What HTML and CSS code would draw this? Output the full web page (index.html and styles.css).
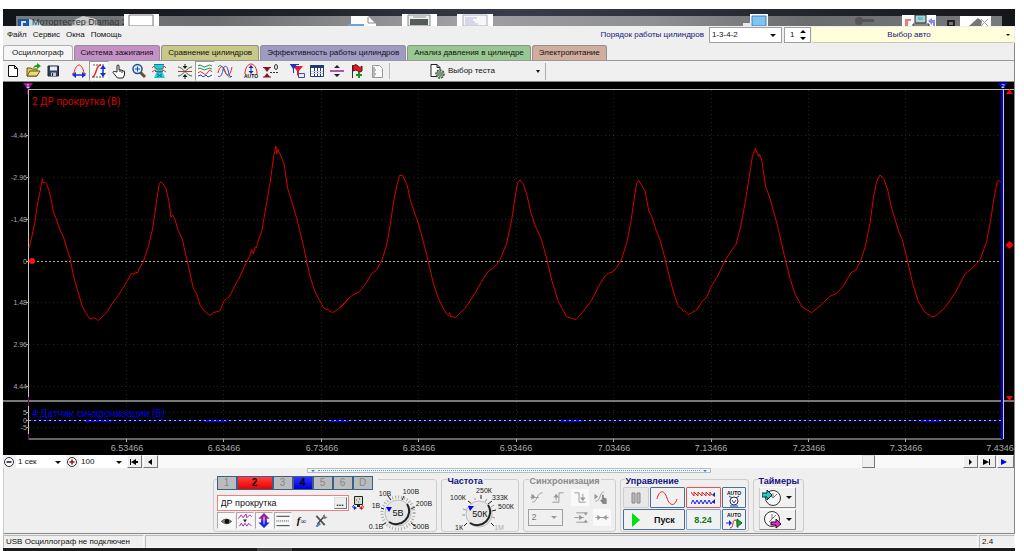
FILE: index.html
```html
<!DOCTYPE html>
<html lang="ru">
<head>
<meta charset="utf-8">
<title>Мотортестер Diamag 2</title>
<link rel="stylesheet" href="styles.css">
</head>
<body>
<div class="window">

<svg class="desktop" viewBox="3 9 1012 17" aria-hidden="true">
  <defs>
    <linearGradient id="sky"><stop offset="0" stop-color="#111418"/><stop offset=".3" stop-color="#20222a"/><stop offset=".5" stop-color="#3a3c4c"/><stop offset=".68" stop-color="#2c2e3a"/><stop offset="1" stop-color="#14161a"/></linearGradient>
    <linearGradient id="glass"><stop offset="0" stop-color="#777a7c"/><stop offset=".2" stop-color="#6c6e70"/><stop offset=".45" stop-color="#a0a0a4"/><stop offset=".65" stop-color="#8e8f92"/><stop offset=".8" stop-color="#6a6c6e"/><stop offset="1" stop-color="#77797a"/></linearGradient>
  </defs>
  <rect x="3" y="9" width="1012" height="17" fill="url(#sky)"/>
  <rect x="16" y="16" width="986" height="10" fill="url(#glass)"/>
  <rect x="18" y="19" width="11" height="7" fill="#1c56a4"/>
  <path d="M21 21h5v2h-3v3h-2z" fill="#cfe2f5"/>
  <path d="M29 19l10 3 3 4H29z" fill="#b9dbea"/>
  <path d="M72 26l2-6 9-4 13 3 3 7z" fill="#dfe1e2" opacity=".8"/>
  <path d="M76 20l8 3 11-3" stroke="#aeb2b4" fill="none"/>
  <text x="32" y="25" class="ghost">Мотортестер Diamag 2</text>
  <path d="M124 14h35v12h-35z" fill="#fff"/><path d="M129 15h24v11h-24z" fill="#fff" stroke="#777"/>
  <path d="M351 16h17l8 8v2h-25z" fill="#fff"/><path d="M368 17v6h7" fill="none" stroke="#888"/><path d="M348 24h16v2h-16z" fill="#6aa3e4"/>
  <path d="M402 14h35v12h-35z" fill="#fff"/><path d="M408 15h22v11h-22z" fill="#eee" stroke="#888"/><path d="M410 19h18v6h-18z" fill="#555c5c"/><path d="M413 17h13" stroke="#999"/>
  <path d="M457 14h36v12h-36z" fill="#fff"/><path d="M463 15h24v11h-24z" fill="#f7f7fb" stroke="#aab"/><path d="M465 18h12M465 20h8M465 22h10M465 24h13" stroke="#b5b5dd"/>
  <path d="M750 14h18v12h-18z" fill="#fff"/><path d="M752 16h14v10h-14z" fill="#7fc4f0" stroke="#3f7fd0"/><path d="M743 23h8v3h-8z" fill="#e8e8e8"/>
  <circle cx="859" cy="21" r="4" fill="#555"/><path d="M862 19h12v3h-12z" fill="#555"/>
  <path d="M902 15h34v11h-34z" fill="#fff"/><path d="M905 19h6v2h-3v5h-3z" fill="#f07878"/><path d="M915 15h11v8h-11z" fill="#b8cccc" stroke="#222"/><path d="M918 17h5v3h-5z" fill="#39d0e8"/><path d="M913 24h16v2h-16z" fill="#ddd" stroke="#333"/><path d="M928 21l4-3v2h3v6h-2v-3h-1v2z" fill="#8b86f0"/>
  <path d="M948 21h6v5h-6z" fill="none" stroke="#222" stroke-width="2"/>
  <path d="M960 16h31v10h-31z" fill="#fff"/><path d="M969 26l9-8 4 3-1 5z" fill="#777"/><path d="M981 19l7 7M988 19l-7 7" stroke="#999"/>
</svg>

<header class="menubar">
  <nav class="menu">
    <button type="button">Файл</button><button type="button">Сервис</button><button type="button">Окна</button><button type="button">Помощь</button>
  </nav>
  <div class="order">
    <label for="order">Порядок работы цилиндров</label>
    <span class="combo order-combo"><select id="order"><option>1-3-4-2</option></select></span>
    <span class="spin"><input type="text" value="1" aria-label="Цилиндр"><svg viewBox="0 0 6 12" aria-hidden="true"><path d="M0 4h6L3 1zM0 8h6l-3 3z"/></svg></span>
    <button type="button" class="car"><span>Выбор авто</span><i class="caret"></i></button>
  </div>
</header>

<nav class="tabs">
  <button type="button" class="tab active">Осциллограф</button>
  <button type="button" class="tab violet">Система зажигания</button>
  <button type="button" class="tab olive">Сравнение цилиндров</button>
  <button type="button" class="tab blue">Эффективность работы цилиндров</button>
  <button type="button" class="tab green">Анализ давления в цилиндре</button>
  <button type="button" class="tab tan">Электропитание</button>
</nav>

<div class="toolbar">
  <button type="button" class="tool" aria-label="Новый"><svg viewBox="0 0 16 16"><path d="M3.500 2.500h6l3 3V13.500h-9zM9.500 2.500v3h3" fill="#fff" stroke="#111"/></svg></button>
  <button type="button" class="tool" aria-label="Открыть"><svg viewBox="0 0 16 16"><path d="M2 13V5h4l1 1h5v7z" fill="#d8c860" stroke="#665800"/><path d="M2 13l3-5h10l-3 5z" fill="#e9da83" stroke="#665800"/><path d="M8 5q1-3 4-3V0l4 3-4 3V4q-2 0-4 1z" fill="#15a015"/></svg></button>
  <button type="button" class="tool" aria-label="Сохранить"><svg viewBox="0 0 16 16"><path d="M3 3h10.500v10H3z" fill="#34405f" stroke="#182036"/><path d="M5 3.500h7v4H5z" fill="#e8ecf4"/><path d="M6 9.500h5V13H6z" fill="#c4cada"/><path d="M7 10h1v3H7z" fill="#223"/></svg></button>
  <span class="sep"></span>
  <button type="button" class="tool" aria-label="Масштаб по горизонтали"><svg viewBox="0 0 16 16" fill="none"><path d="M1 11l2-1C4 5 6 2 8 2s4 3 5 8l2 1" stroke="#e22"/><path d="M3 12h10" stroke="#1030d8" stroke-width="1.500"/><path d="M1 12l4-3v6zM15 12l-4-3v6z" fill="#1030d8"/></svg></button>
  <button type="button" class="tool pressed" aria-label="Масштаб по вертикали"><svg viewBox="0 0 16 16" fill="none"><path d="M2 2h12M2 14h12" stroke="#555" stroke-dasharray="2 1"/><path d="M1 14c5 0 3-12 9-12" stroke="#e22" stroke-width="1.500"/><path d="M12 4v8" stroke="#1030d8" stroke-width="1.500"/><path d="M12 2l3 4H9zM12 14l3-4H9z" fill="#1030d8"/></svg></button>
  <button type="button" class="tool" aria-label="Рука"><svg viewBox="0 0 16 16"><path d="M6 9V2.500q1-1 2 0V7l1-.5 1 .8 1-.3 1 1 1.500.2V12l-1.500 3H6.500L2 9.500q0-1.500 1.500-1z" fill="#fff" stroke="#222"/><path d="M9 7v2M11 8v2" stroke="#222"/></svg></button>
  <button type="button" class="tool" aria-label="Лупа"><svg viewBox="0 0 16 16"><path d="M9 9l5 5" stroke="#6b5030" stroke-width="3"/><circle cx="6.500" cy="6" r="4.500" fill="#d9ecfb" stroke="#1f4f9a" stroke-width="1.500"/><path d="M4 6h5M6.500 3.500v5" stroke="#1f4f9a"/></svg></button>
  <button type="button" class="tool" aria-label="Область"><svg viewBox="0 0 16 16"><path d="M3 1h10v4l-2 3 3 7H3l3-7-3-3z" fill="#16cfe0"/><path d="M1 5l2-2 3 3h5l2-3 2 2M1 9l3-2 2 2h5l1-2 3 2" stroke="#e04040" fill="none"/><path d="M3 1.500h10M4 8.500h8" stroke="#0a8896"/><path d="M6 11l5 3M11 11l-5 3" stroke="#0a6a78"/></svg></button>
  <span class="sep"></span>
  <button type="button" class="tool" aria-label="Совместить"><svg viewBox="0 0 16 16" fill="none"><path d="M1 8.500h14" stroke="#e22"/><path d="M1 4c5 0 9 9 14 9M15 4c-5 0-9 9-14 9" stroke="#20703a"/><path d="M8 1v3M8 16v-3" stroke="#222"/><path d="M5.500 3h5L8 6zM5.500 14h5L8 11z" fill="#222"/></svg></button>
  <button type="button" class="tool pressed" aria-label="Осциллограммы раздельно"><svg viewBox="0 0 16 16" fill="none"><path d="M1 3q2-2 4 0t5 0 5 0M1 6q2-2 4 0t5 0 5 0" stroke="#1c8a4c"/><path d="M1 10q2-3 5 0t5-1 4 0" stroke="#e22"/><path d="M1 13l3-1 2 2 3-2 2 2 4-2" stroke="#1c40e0"/></svg></button>
  <button type="button" class="tool" aria-label="Осциллограммы вместе"><svg viewBox="0 0 16 16" fill="none"><path d="M1 4c3-4 5 1 7 5s5 7 7 4" stroke="#1c9a6a"/><path d="M1 10C3 2 6 2 8 8s5 6 7-4" stroke="#e22"/><path d="M1 13c2 2 4-1 5-6s4-5 5 0 2 8 4 6" stroke="#1c40e0"/></svg></button>
  <span class="sep"></span>
  <button type="button" class="tool" aria-label="Авто"><svg viewBox="0 0 16 16" fill="none"><path d="M2 11C2 5 5 1 8 1s6 4 6 10" stroke="#e22"/><path d="M8 4v6" stroke="#1030a0"/><path d="M8 2l2.500 3h-5zM8 11l2.500-3h-5z" fill="#1030a0"/><text x="1" y="15" class="auto-text">AUTO</text></svg></button>
  <button type="button" class="tool" aria-label="Ноль"><svg viewBox="0 0 16 16" fill="none"><path d="M1 5h6L4 9zM1 14h6l-3-4z" fill="#8c1420"/><path d="M0 4.500h8M0 14h8" stroke="#8c1420"/><path d="M7 9.500h9" stroke="#333" stroke-dasharray="2 1"/><ellipse cx="13" cy="4" rx="1.500" ry="2.500" stroke="#333"/></svg></button>
  <span class="sep"></span>
  <button type="button" class="tool" aria-label="Фильтр"><svg viewBox="0 0 16 16"><path d="M1 1h7L5 6v4H4V6z" fill="#1c32d0"/><path d="M4 3h10l-4 5v6L8 12V8z" fill="#e02030"/><path d="M1 1.500h9M3 3.500h5" stroke="#1c32d0"/><path d="M9.500 10.500h6v4h-6z" fill="#e8ecff" stroke="#4050a0"/></svg></button>
  <button type="button" class="tool" aria-label="Таблица"><svg viewBox="0 0 16 16"><path d="M1.500 2.500h13v11h-13z" fill="#fff" stroke="#223c70"/><path d="M1 2h14v3H1z" fill="#223c70"/><path d="M5.500 5v8M8.500 5v8M11.500 5v8" stroke="#223c70"/><path d="M2 8.500h12M2 10.500h12" stroke="#ccd"/></svg></button>
  <button type="button" class="tool" aria-label="Разделить"><svg viewBox="0 0 16 16"><path d="M1 8h14" stroke="#a0209a" stroke-width="1.500"/><path d="M5 5h6L8 2zM5 11h6l-3 3z" fill="#222"/></svg></button>
  <button type="button" class="tool" aria-label="Метка"><svg viewBox="0 0 16 16"><path d="M3.500 2v13" stroke="#333"/><path d="M4 3q3-3 5 0t4 0v5q-2 2-4 0T4 8z" fill="#e01820" stroke="#6a0c10"/><path d="M10 9v6M7 12h6" stroke="#14922c" stroke-width="2"/></svg></button>
  <button type="button" class="tool" aria-label="Отчёт"><svg viewBox="0 0 16 16"><path d="M3.500 2.500h7l3 3v9h-10z" fill="#fafafa" stroke="#999"/><path d="M4 5h2M4 7h3M4 9h2M4 11h3M4 13h2" stroke="#777"/></svg></button>
  <span class="sep line"></span>
  <button type="button" class="test"><svg viewBox="0 0 16 16" aria-hidden="true"><path d="M2 1.500h6l3 3v9H2zM8 1.500v3h3" fill="#fff" stroke="#222"/><circle cx="11" cy="11" r="4" fill="#b8d0b8" stroke="#3c5a3c" stroke-width="1.500" stroke-dasharray="2 1"/><path d="M9 9v4M11 8v6M13 9v4" stroke="#3c5a3c"/></svg><span>Выбор теста</span><i class="caret"></i></button>
</div>

<svg class="scope" viewBox="3 82 1011 373" role="img" aria-label="Осциллограмма">
  <rect x="3" y="82" width="1011" height="373" fill="#000"/>
  <g class="grid">
    <path d="M126.500 90v349M223.500 90v349M321.500 90v349M418.500 90v349M516.500 90v349M613.500 90v349M711.500 90v349M808.500 90v349M905.500 90v349"/>
    <path d="M29 135.500h973M29 177.500h973M29 219.500h973M29 302.500h973M29 344.500h973M29 386.500h973M29 412.500h973M29 427.500h973"/>
  </g>
  <path d="M29 89.500h985" stroke="#bbb"/>
  <path d="M3 401h1011" stroke="#777" stroke-width="2"/>
  <path d="M28.500 89v350h974" stroke="#c8c8c8" fill="none"/>
  <path d="M26 135.500h3M26 177.500h3M26 219.500h3M26 261.500h3M26 302.500h3M26 344.500h3M26 386.500h3M26 412.500h3M26 420.500h3M26 427.500h3M126.500 439v3M223.500 439v3M321.500 439v3M418.500 439v3M516.500 439v3M613.500 439v3M711.500 439v3M808.500 439v3M905.500 439v3" stroke="#aaa"/>
  <path d="M29 261.500h973" stroke="#b0b0b0" stroke-dasharray="2 2"/>
  <path d="M29 420.500h973" stroke="#0000e8"/>
  <path d="M85 421h26M205 421h22M330 421h18M560 421h22M921 421h20" stroke="#0000ff" stroke-width="2"/>
  <path d="M29 420.500h973" stroke="#b4b4ff" stroke-dasharray="2 3"/>
  <polyline class="wave" transform="translate(20 130) scale(.33333)" points="27,355 36,318 45,275 52,225 60,185 65,160 67,146 70,160 74,156 80,162 88,185 94,212 100,245 110,270 120,300 130,320 140,352 150,385 157,420 165,455 175,488 185,525 197,548 210,567 218,564 228,565 234,572 245,562 262,545 278,518 295,497 308,475 320,455 335,430 343,433 347,425 352,430 358,415 370,395 385,350 397,300 404,255 410,210 418,160 424,155 437,172 447,215 453,262 458,255 465,268 474,300 488,330 495,365 500,385 510,430 520,475 530,490 540,525 552,542 570,556 580,548 600,542 612,512 628,500 644,468 660,440 672,412 683,390 690,378 695,358 700,372 706,350 710,354 712,340 725,305 738,230 750,160 756,115 762,75 768,48 770,72 774,58 780,72 792,100 803,175 820,230 830,265 840,305 850,345 860,395 872,445 885,485 897,508 912,535 925,540 938,548 965,530 978,513 988,503 960,533 972,520 995,497 1018,485 1038,460 1055,430 1070,420 1085,392 1100,345 1110,290 1120,220 1130,170 1138,137 1148,136 1162,168 1172,215 1195,280 1210,335 1225,395 1240,460 1255,505 1270,535 1280,552 1286,556 1289,548 1292,560 1307,562 1335,535 1350,512 1365,490 1383,458 1400,430 1410,420 1420,415 1440,390 1460,340 1475,270 1487,190 1493,158 1500,150 1510,162 1522,200 1532,245 1545,285 1563,325 1580,385 1595,450 1615,515 1640,560 1667,569 1680,556 1695,537 1712,515 1740,462 1755,438 1765,430 1780,425 1790,412 1803,392 1820,340 1832,280 1845,190 1850,160 1856,151 1875,183 1887,245 1895,258 1908,300 1920,330 1935,385 1950,448 1962,490 1975,530 1985,536 1990,545 1994,542 2005,554 2030,540 2048,512 2060,502 2075,466 2092,440 2115,392 2132,365 2148,343 2162,290 2175,220 2187,145 2197,80 2206,55 2216,80 2218,72 2225,90 2237,170 2250,205 2272,285 2295,385 2310,445 2325,492 2347,532 2375,548 2405,523 2428,500 2450,490 2470,468 2493,428 2508,420 2523,390 2537,345 2550,280 2560,205 2570,155 2580,135 2592,148 2603,180 2615,235 2635,300 2647,330 2662,390 2678,460 2695,515 2715,547 2735,560 2747,558 2775,532 2805,490 2835,432 2862,410 2880,390 2900,335 2912,270 2922,205 2932,155 2937,151 2945,160"/>
  <path d="M27.500 90v4M28.500 397v9M28.500 434v6" stroke="#800080"/>
  <path d="M23 83h10l-5 7z" fill="#a010a0"/><text class="flag" x="28" y="88">1</text>
  <path d="M1002 90v349" stroke="#0000d0" stroke-width="2"/><path d="M1003.500 90v349" stroke="#c8c8ff"/>
  <path d="M998 83h10l-5 6z" fill="#0000ff"/><text class="flag" x="1003" y="88">2</text>
  <path d="M1006 94h7l-3.500-5zM1006 396h7l-3.500 5zM1005.500 245l4-4 4 4-4 4z" fill="#f00"/>
  <circle cx="32" cy="261" r="3" fill="#ff1010"/>
  <text class="chan red" x="32" y="105">2 ДР прокрутка (В)</text>
  <text class="chan navy" x="32" y="417">4 Датчик синхронизации (В)</text>
  <g class="yaxis">
    <text x="27" y="138">-4.44</text><text x="27" y="180">-2.96</text><text x="27" y="222">-1.48</text><text x="27" y="264">0</text><text x="27" y="305">1.48</text><text x="27" y="347">2.96</text><text x="27" y="389">4.44</text><text x="27" y="415">5</text><text x="27" y="423">0</text><text x="27" y="430">-5</text>
  </g>
  <g class="xaxis">
    <text x="127" y="451">6.53466</text><text x="224" y="451">6.63466</text><text x="322" y="451">6.73466</text><text x="419" y="451">6.83466</text><text x="516" y="451">6.93466</text><text x="614" y="451">7.03466</text><text x="711" y="451">7.13466</text><text x="809" y="451">7.23466</text><text x="906" y="451">7.33466</text><text x="1000" y="451">7.4346</text>
  </g>
</svg>

<div class="timebar">
  <button type="button" class="round" aria-label="Меньше"><svg viewBox="0 0 12 12"><circle cx="6" cy="6" r="4.500" fill="#fff" stroke="#333"/><path d="M3.500 6h5" stroke="#113" stroke-width="1.500"/></svg></button>
  <span class="combo time-combo"><select aria-label="Развёртка"><option>1 сек</option></select></span>
  <button type="button" class="round" aria-label="Больше"><svg viewBox="0 0 12 12"><circle cx="6" cy="6" r="4.500" fill="#fff" stroke="#333"/><path d="M3.500 6h5M6 3.500v5" stroke="#a01020" stroke-width="1.500"/></svg></button>
  <span class="combo scale-combo"><select aria-label="Масштаб"><option>100</option></select></span>
  <button type="button" class="step" aria-label="В начало"><svg viewBox="0 0 12 8"><path d="M2 1h1v6H2zM8 1v6L3 4zM7 3h3v2H7z"/></svg></button>
  <button type="button" class="step" aria-label="Назад"><svg viewBox="0 0 12 8"><path d="M8 1v6L4 4z"/></svg></button>
  <div class="track"><span class="thumb"></span></div>
  <button type="button" class="step" aria-label="Вперёд"><svg viewBox="0 0 12 8"><path d="M5 1v6l3-3z"/></svg></button>
  <button type="button" class="step wide" aria-label="В конец"><svg viewBox="0 0 12 8"><path d="M9 1h1v6H9zM3 1v6l6-3z"/></svg></button>
  <button type="button" class="step wide play" aria-label="Воспроизвести"><svg viewBox="0 0 12 8"><path d="M3 1v6l6-3z"/></svg></button>
</div>

<main class="panel">
  <div class="handle"><i></i><b></b><i></i></div>
  <div class="groups">
    <section class="group channels-group">
      <div class="channels">
        <button type="button">1</button><button type="button" class="ch-red">2</button><button type="button">3</button><button type="button" class="ch-blue">4</button><button type="button">5</button><button type="button">6</button><button type="button">D</button>
      </div>
      <div class="channel-body">
        <div class="channel-left">
          <div class="sensor-row">
            <span class="sensor"><input type="text" value="ДР прокрутка" aria-label="Датчик"><button type="button" aria-label="Выбрать датчик">...</button></span>
            <svg class="swap" viewBox="0 0 14 14" aria-hidden="true"><path d="M3.500.5h8v8h-8z" fill="#cfe0cc" stroke="#222"/><path d="M6 9h3v2H6z" fill="#222"/><path d="M5 4h1M8 3h1M7 6h1" stroke="#555"/><path d="M3 9q-3 2 1 4" fill="none" stroke="#1020e0"/><path d="M3 10l3 2-3 2z" fill="#1020e0"/><path d="M11 9q3 2 0 4" fill="none" stroke="#e01020"/><path d="M11 10l-3 2 3 2z" fill="#e01020"/></svg>
          </div>
          <div class="toggles">
            <button type="button" class="tog down" aria-label="Показать"><svg viewBox="0 0 16 16"><path d="M3 9q5-5 11 0-5 5-11 0z" fill="#888" stroke="#555"/><circle cx="9" cy="9" r="2.500" fill="#111"/></svg></button>
            <button type="button" class="tog down" aria-label="Форма"><svg viewBox="0 0 16 16" fill="none"><path d="M1 6l3-4 2 3 3-4 1 4 3-3 2 2M2 14l2-3 2 3 2-3 2 3 2-3 3 3" stroke="#a020a0"/><path d="M6 7h4l-2 3z" fill="#222"/></svg></button>
            <button type="button" class="tog down" aria-label="Сдвиг"><svg viewBox="0 0 16 16"><path d="M8 0l6 6h-3v3H5V6H2z" fill="#90209c"/><path d="M8 16l6-6h-3V8H5v2H2z" fill="#1420f0"/><path d="M8 4v8" stroke="#fff"/></svg></button>
            <button type="button" class="tog down" aria-label="Уровень"><svg viewBox="0 0 16 16"><path d="M1 3.500h14M1 13.500h14" stroke="#333"/><path d="M1 8.500h14" stroke="#333" stroke-dasharray="1 1"/></svg></button>
            <button type="button" class="tog fx">f<small>∞</small></button>
            <button type="button" class="tog" aria-label="Настройки"><svg viewBox="0 0 16 16"><path d="M3 3l9 10" stroke="#555" stroke-width="2"/><path d="M12 3l-8 9" stroke="#444" stroke-width="1.500"/><path d="M2 14l4-4 2 2-4 3z" fill="#4a7cc4"/><path d="M10 3l2-2v3h3l-2 2h-2z" fill="#777"/></svg></button>
          </div>
        </div>
        <svg class="dial" viewBox="370 486 66 46" role="img" aria-label="Диапазон 5В">
          <circle cx="401" cy="513" r="16" class="tick-ring"/><path class="ticks" d="M389 523l-4 2M384 508l3 1M391 496l3 4M407 496l-2 4M418 507l-4 2M414 523l4 3"/>
          <circle cx="401" cy="513" r="13" fill="#e8e8e8" stroke="#bbb"/><path d="M410 504a13 13 0 0 1-18 18" class="rim"/><path d="M389 507h6l-3 5z" fill="#00f"/>
          <text class="val" x="401" y="516">5В</text>
          <g class="marks"><text x="388" y="496">10В</text><text x="414" y="494">100В</text><text x="379" y="508">1В</text><text x="427" y="506">200В</text><text x="379" y="529">0.1В</text><text x="424" y="529">500В</text></g>
        </svg>
      </div>
    </section>

    <section class="group freq-group">
      <h2>Частота</h2>
      <svg class="dial" viewBox="444 486 70 46" role="img" aria-label="Частота 50К">
        <path class="ticks light" d="M462 508l3 1M461 514h3M486 498l-2 3M494 517l-3-1M474 497v2M493 504l-3 2"/><path class="ticks" d="M466 522l-3 3M467 500l4 3M480 494v4M491 500l-4 3M495 509l-4 1M490 522l3 3"/>
        <circle cx="478" cy="513" r="13" fill="#e8e8e8" stroke="#bbb"/><path d="M487 504a13 13 0 0 1-18 18" class="rim"/><path d="M467 505h6l-4 5z" fill="#00f"/>
        <text class="val" x="479" y="516">50К</text>
        <g class="marks"><text x="457" y="499">100К</text><text x="483" y="492">250К</text><text x="499" y="499">333К</text><text x="505" y="508">500К</text><text x="458" y="529">1К</text><text x="498" y="529" fill="#aaa">1М</text></g>
      </svg>
    </section>

    <section class="group sync-group">
      <h2 class="off">Синхронизация</h2>
      <div class="sync-row">
        <button type="button" class="tog dim" disabled aria-label="Фронт"><svg viewBox="0 0 16 16" fill="none"><path d="M3 13c6 0 4-10 11-10M4 5v5M1 8h9" stroke="#999"/><path d="M2 4l4 3-4 3z" fill="#999"/></svg></button>
        <button type="button" class="tog dim" disabled aria-label="Нарастание"><svg viewBox="0 0 16 16" fill="none"><path d="M2 13h7V3h5M6 6v5" stroke="#999"/><path d="M3 8h6L6 4z" fill="#999"/></svg></button>
        <button type="button" class="tog dim lit" disabled aria-label="Спад"><svg viewBox="0 0 16 16" fill="none"><path d="M2 3h5v10h7M11 4v6" stroke="#999"/><path d="M8 8h6l-3 4z" fill="#999"/></svg></button>
        <button type="button" class="tog dim" disabled aria-label="Рука"><svg viewBox="0 0 16 16" fill="none"><path d="M2 12c6 0 4-9 9-10" stroke="#999"/><path d="M1 4l4 3-4 3z" fill="#999"/><path d="M9 5v5l-2 1 3 4h4V9l-3-1V5z" fill="#888"/></svg></button>
      </div>
      <div class="sync-row">
        <span class="combo sync-combo"><select disabled aria-label="Канал"><option>2</option></select></span>
        <button type="button" class="tog dim" disabled aria-label="Уровень"><svg viewBox="0 0 16 16" fill="none"><path d="M3 3h12M1 8h10M3 13h12" stroke="#999"/><path d="M6 5l4 3-4 3zM11 3h4l-2 3zM11 13h4l-2-3z" fill="#999"/></svg></button>
        <button type="button" class="tog dim lit" disabled aria-label="Центр"><svg viewBox="0 0 16 16"><path d="M1 8h14" stroke="#999"/><path d="M3 5l4 3-4 3zM13 5L9 8l4 3z" fill="#999"/></svg></button>
      </div>
    </section>

    <section class="group control-group">
      <h2>Управление</h2>
      <div class="controls">
        <button type="button" class="btn pause" aria-label="Пауза"><svg viewBox="0 0 16 16"><path d="M4 3h3v10H4zM9 3h3v10H9z" fill="#bbb" stroke="#888"/></svg></button>
        <button type="button" class="btn" aria-label="Синус"><svg class="w24" viewBox="0 0 24 16"><path d="M2 9C4 0 9-1 12 8s8 8 10 1" fill="none" stroke="#e02020"/></svg></button>
        <button type="button" class="btn redline" aria-label="Запись"><svg class="w24" viewBox="0 0 24 16" fill="none"><path d="M0 2l3 4V2l4 4V2l4 4V2l4 4V2l4 4V2l2 3" stroke="#e02020"/><path d="M0 14l2-4 2 4 2-4 2 4 2-4 2 4 2-4 2 4 2-4 2 4 2-3" stroke="#1420f0"/><path d="M24 2v5l-3-2z" fill="#222a90"/><path d="M24 9v5l-3-2z" fill="#1420a0"/></svg></button>
        <button type="button" class="btn" aria-label="Авто масштаб"><svg viewBox="0 0 16 18"><text x="1" y="6" class="auto-text">AUTO</text><circle cx="8" cy="12" r="4" fill="#fff" stroke="#333"/><path d="M3 7l3 2M13 7l-3 2M6 11l2 3 2-3M4 17h8" stroke="#1040d0" fill="none"/></svg></button>
        <button type="button" class="btn start"><svg viewBox="0 0 8 14" aria-hidden="true"><path d="M0 0l8 7-8 7z" fill="#00e010"/></svg>Пуск</button>
        <button type="button" class="btn value">8.24</button>
        <button type="button" class="btn" aria-label="Авто запуск"><svg viewBox="0 0 16 18"><text x="1" y="6" class="auto-text">AUTO</text><path d="M4 17c4 0 2-8 5-8s2 6 3 8" stroke="#c02020" fill="none"/><path d="M0 12h3" stroke="#1420f0"/><path d="M3 9l3 3-3 3z" fill="#1420f0"/><path d="M11 8l5 4-5 4z" fill="#12b020" stroke="#064"/></svg></button>
      </div>
    </section>

    <section class="group timer-group">
      <h2>Таймеры</h2>
      <button type="button" class="btn timer" aria-label="Таймер начала"><svg viewBox="0 0 20 18"><circle cx="11" cy="9" r="7.500" fill="#fafafa" stroke="#333"/><path d="M11 9V4M11 9l4-4M11 9l-3-3" stroke="#777"/><path d="M0 4h5V1l5 5-5 5V8H0z" fill="#2cc4c4" stroke="#033"/></svg><i class="caret"></i></button>
      <button type="button" class="btn timer" aria-label="Таймер конца"><svg viewBox="0 0 20 18"><circle cx="10" cy="8" r="7.500" fill="#fafafa" stroke="#333"/><path d="M10 8V3M10 8l4-4M10 8l-3 3" stroke="#777"/><path d="M9 11h5V8l5 5-5 4v-3H9z" fill="#e030c0" stroke="#303"/></svg><i class="caret"></i></button>
    </section>
  </div>
</main>

<footer class="status"><span class="device">USB Осциллограф не подключен</span><span class="mid"></span><span class="version">2.4</span></footer>
<div class="taskbar"><span></span></div>
</div>
</body>
</html>
```

FILE: styles.css
```css
* { box-sizing: border-box; }
body { margin: 9px 9px 0 3px; background: #fff; font: 8px/12px "Liberation Sans", Arial, sans-serif; color: #111; }
button, input, select { font: inherit; color: inherit; margin: 0; padding: 0; border: 0; background: none; border-radius: 0; }
svg { display: block; flex: none; }
.window { background: #efefef; }
.desktop, .scope { width: 100%; height: auto; }
.ghost { font-size: 9px; fill: #333; }
.caret { border: 3px solid transparent; border-top-color: #111; border-bottom: 0; }

.menubar { display: flex; justify-content: space-between; height: 17px; padding-right: 1px; }
.menu { display: flex; gap: 6px; padding-left: 4px; align-items: center; }
.order { display: flex; align-items: flex-end; color: #15157c; }
.order label { margin-right: 5px; line-height: 16px; }
.combo { position: relative; display: flex; height: 16px; color: #111; background: #fff; border: 1px solid #a0a0a0; }
.combo select { width: 100%; appearance: none; padding-left: 2px; }
.combo::after { content: ""; position: absolute; right: 5px; top: 50%; margin-top: -1px; border: 3px solid transparent; border-top-color: #111; border-bottom: 0; pointer-events: none; }
.order-combo { width: 73px; margin-right: 2px; }
.spin { display: flex; align-items: center; width: 27px; height: 16px; margin-right: 1px; padding: 0 4px 0 5px; background: #fff; border: 1px solid #a0a0a0; color: #111; }
.spin input { flex: 1; width: 10px; min-width: 0; }
.spin svg { width: 6px; height: 12px; }
.car { display: flex; align-items: center; width: 202px; height: 16px; background: #ffffdc; padding-right: 4px; border-bottom: 1px solid #c8c8b8; border-radius: 2px; }
.car span { flex: 1; }
.car .caret { border-width: 2px 2px 0; }

.tabs { display: flex; gap: 1px; align-items: flex-end; height: 17px; border-right: 1px solid #888; }
.tab { height: 15px; padding: 0 6px; border: 1px solid #909090; border-bottom: 0; border-radius: 3px 3px 0 0; white-space: nowrap; }
.tab.active { background: #f6f6f6; padding: 0 8px; border-color: #b0b0b0; }
.violet { background: #c690c6; }
.olive { background: #c8c887; }
.blue { background: #9f9ac4; }
.green { background: #97c891; }
.tan { background: #d0ad9c; }

.toolbar { display: flex; align-items: center; height: 22px; border-top: 1px solid #999; border-bottom: 1px solid #888; border-right: 1px solid #888; background: #f0f0f0; }
.tool { width: 20px; height: 20px; padding: 1px; border: 1px solid transparent; }
.tool svg { width: 16px; height: 16px; }
.tool.pressed { background: #fafafa; border-color: #999 #eee #eee #999; }
.sep { width: 6px; height: 16px; }
.sep.line { border-left: 2px solid #f0f0f0; box-shadow: inset 1px 0 #bbb; }
.auto-text { font: bold 5px "Liberation Sans", Arial, sans-serif; fill: #111; }
.test { display: flex; align-items: center; width: 153px; height: 17px; padding: 0 5px 0 36px; border-right: 1px solid #aaa; }
.test svg { width: 16px; height: 16px; margin-right: 3px; }
.test span { flex: 1; text-align: left; }
.test .caret { border-width: 3px 2px 0; }

.scope, .timebar, .panel { border-right: 1px solid #888; }
.grid path { stroke: #24240c; stroke-dasharray: 1 3; }
.wave { fill: none; stroke: #d80000; stroke-width: 1; vector-effect: non-scaling-stroke; }
.chan { font: 10px Roboto, Arial, sans-serif; }
.red { fill: #d80000; }
.navy { fill: #0000e0; }
.yaxis { font-size: 7px; fill: #aaa; text-anchor: end; }
.xaxis { font-size: 9px; fill: #aaa; text-anchor: middle; }
.flag { font-size: 6px; fill: #fff; text-anchor: middle; }

.timebar { display: flex; height: 13px; background: #f0f0f0; }
.round { width: 13px; height: 13px; }
.round svg { width: 12px; height: 12px; }
.timebar .combo { height: 13px; border: 0; }
.time-combo { width: 50px; }
.scale-combo { width: 48px; }
.step { width: 15px; height: 13px; margin-right: 1px; border: 1px solid; border-color: #fff #777 #777 #fff; background: #efefef; }
.step svg { width: 12px; height: 8px; }
.step.wide { width: 17px; }
.play { fill: #0000ff; margin-right: 0; }
.track { flex: 1; background: #f9f9f9; display: flex; justify-content: flex-end; padding-right: 88px; }
.thumb { width: 13px; border: 1px solid; border-color: #ddd #777 #777 #ddd; background: #efefef; }

.panel { border-bottom: 1px solid #888; border-left: 1px solid #ccc; padding-bottom: 1px; }
.handle { display: flex; align-items: center; gap: 3px; width: 404px; height: 5px; margin: 0 auto; padding: 0 3px; border: 1px solid #bbb; background: #f4f8fc; }
.handle i { border: 2px solid transparent; border-top-color: #1c84d8; border-bottom: 0; }
.handle b { flex: 1; border-top: 1px dotted #4ea0dc; }
.groups { display: flex; justify-content: center; gap: 4px; margin-top: 6px; padding-right: 2px; }
.group { height: 53px; border: 1px solid #ccc; border-radius: 3px; padding: 0 3px; }
.group h2 { width: fit-content; margin: -4px 0 1px 2px; padding: 0 1px; background: #efefef; font: bold 9px/10px "Liberation Sans", Arial, sans-serif; color: #15157c; }
.group h2.off { color: #8a8a8a; }
.channels-group { width: 224px; }
.freq-group { width: 78px; }
.sync-group { width: 93px; }
.control-group { width: 129px; padding: 0 2px; }
.timer-group { width: 51px; padding: 0 5px; }
.timer-group h2 { margin-left: 0; padding: 0; }

.channels { display: flex; width: fit-content; margin-top: -4px; padding-right: 5px; background: #efefef; }
.channels button { width: 20px; height: 14px; border: 1px solid #3c5f86; background: #bcbcbc; color: #888; font-size: 10px; }
.channels .ch-red { width: 36px; background: linear-gradient(#ff4040, #e80000); color: #200; font-weight: bold; }
.channels .ch-blue { background: linear-gradient(#3030ff, #0000d0); color: #001; font-weight: bold; }
.channel-body { display: flex; }
.channel-left { width: 153px; padding-top: 5px; }
.sensor-row { display: flex; align-items: center; gap: 2px; }
.sensor { display: flex; width: 132px; height: 16px; padding: 1px; background: #fff; border: 1px solid #f08080; font-size: 9px; }
.sensor input { flex: 1; min-width: 0; padding-left: 2px; }
.sensor button { width: 13px; border: 1px solid; border-color: #ddd #777 #777 #ddd; background: #eee; line-height: 4px; font-weight: bold; }
.swap { width: 14px; height: 14px; }
.toggles { display: flex; gap: 1px; padding-top: 1px; }
.tog { display: block; width: 18px; height: 17px; padding: 0; border: 1px solid transparent; }
.tog svg { width: 16px; height: 15px; }
.tog.down { border-color: #aaa #f8f8f8 #f8f8f8 #aaa; background: #f7f7f7; }
.tog.lit { background: #f9f9f9; }
.fx { font: italic bold 11px/12px "Liberation Serif", serif; }
.fx small { font-size: 8px; }
.dial { height: 46px; overflow: visible; margin-top: -4px; }
.channel-body .dial { width: 66px; }
.freq-group .dial { width: 70px; margin-top: 0; }
.tick-ring { fill: none; stroke: #aaa; stroke-width: 3; stroke-dasharray: 1 2; }
.ticks { stroke: #222; }
.ticks.light { stroke: #999; }
.rim { fill: none; stroke: #222; stroke-width: 2; }
.marks { font-size: 7px; fill: #222; text-anchor: middle; }
.val { font-size: 9px; fill: #111; text-anchor: middle; }

.sync-row { display: flex; justify-content: space-between; align-items: center; height: 18px; margin: 2px 1px; }
.sync-combo { width: 35px; height: 17px; margin-right: 6px; background: #f0f0f0; color: #777; font-size: 9px; }
.sync-combo select { padding-left: 3px; opacity: 1; color: #777; }
.sync-combo::after { border-top-color: #999; }

.controls { display: grid; grid-template-columns: 26px 35px 35px 1fr; gap: 1px; }
.btn { display: flex; align-items: center; justify-content: center; height: 21px; border: 1px solid #4a6f96; border-radius: 1px; background: #f1f1f1; }
.btn svg { width: 16px; height: 18px; }
.btn svg.w24 { width: 24px; height: 16px; }
.btn.pause { border-color: #ccc; background: #e8e8e8; }
.btn.redline { border-color: #f05050; }
.btn.start { grid-column: span 2; gap: 14px; font-weight: bold; font-size: 9px; }
.btn.start svg { width: 8px; height: 14px; }
.btn.value { border-color: #7aa6d8; color: #107818; font-weight: bold; font-size: 9px; }
.btn.timer { width: 37px; gap: 4px; border-color: #fff #888 #888 #ccc; margin-bottom: 1px; }
.btn.timer svg { width: 20px; height: 18px; }

.status { display: flex; gap: 1px; height: 14px; padding-top: 1px; line-height: 12px; }
.status span { border: 1px solid; border-color: #bbb #f8f8f8 #f8f8f8 #bbb; padding-left: 2px; line-height: 12px; white-space: nowrap; }
.status .device { width: 141px; }
.status .mid { flex: 1; }
.status .version { width: 36px; }
.taskbar { height: 3px; background: #1b1b1b; padding-left: 254px; }
.taskbar span { display: block; width: 35px; height: 3px; background: #444; }
```
